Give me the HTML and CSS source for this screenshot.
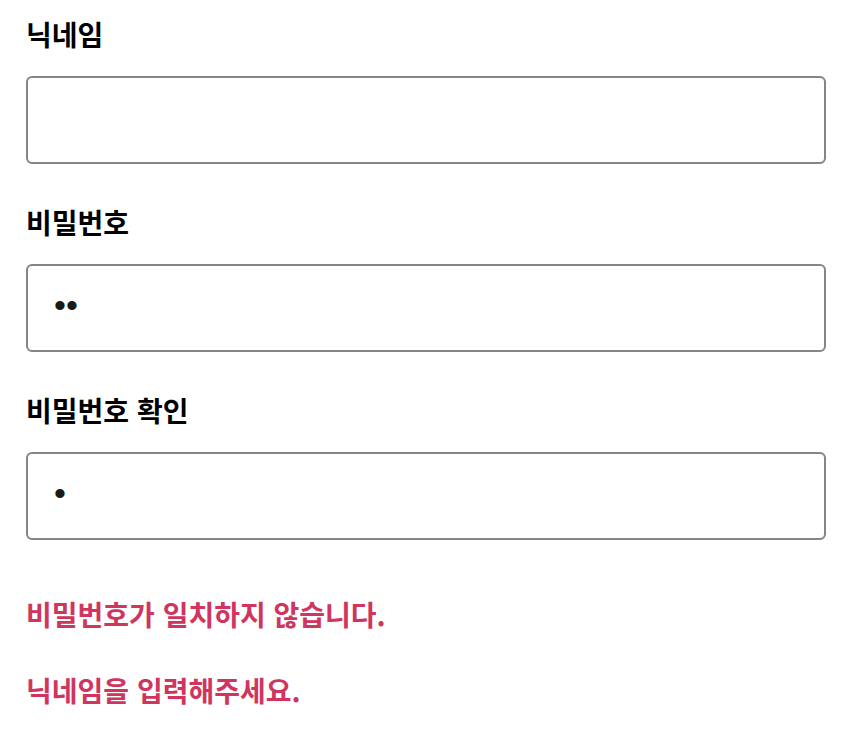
FILE: index.html
```html
<!DOCTYPE html>
<html lang="ko">
<head>
<meta charset="utf-8">
<link rel="stylesheet" href="styles.css">
</head>
<body>
<form class="form">
  <div class="field">
    <label class="label" for="nick">닉네임</label>
    <input class="input" id="nick" type="text">
  </div>
  <div class="field">
    <label class="label" for="pw">비밀번호</label>
    <input class="input" id="pw" type="password" value="12">
  </div>
  <div class="field">
    <label class="label" for="pw2">비밀번호 확인</label>
    <input class="input" id="pw2" type="password" value="1">
  </div>
  <div class="errors">
    <p class="error">비밀번호가 일치하지 않습니다.</p>
    <p class="error">닉네임을 입력해주세요.</p>
  </div>
</form>
</body>
</html>
```
FILE: styles.css
```css
html, body {
  margin: 0;
  padding: 0;
  background: #ffffff;
}
body {
  font-family: "Noto Sans CJK KR", "Noto Sans", sans-serif;
  color: #000000;
}
.form {
  width: 800px;
  padding: 14px 0 0 26px;
  display: flex;
  flex-direction: column;
  gap: 38px;
}
.field {
  display: flex;
  flex-direction: column;
  gap: 22px;
}
.label {
  font-size: 28px;
  font-weight: 700;
  line-height: 40px;
  height: 40px;
}
.input {
  box-sizing: border-box;
  width: 800px;
  height: 88px;
  margin: 0;
  border: 2px solid #858585;
  border-radius: 6px;
  padding: 0 0 6px 26px;
  font-family: "Liberation Sans", Arial, sans-serif;
  font-size: 34px;
  color: #1a1a1a;
  background: #ffffff;
  outline: none;
}
.errors {
  display: flex;
  flex-direction: column;
  gap: 36px;
  padding-top: 16px;
}
.error {
  margin: 0;
  font-size: 28px;
  font-weight: 700;
  line-height: 40px;
  color: #d0355e;
}
```
